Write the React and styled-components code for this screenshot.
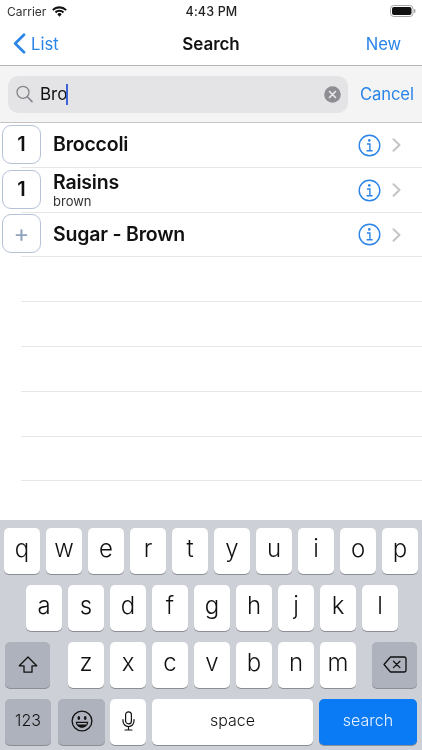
import React from "react";
import styled, { createGlobalStyle } from "styled-components";

const Global = createGlobalStyle`
  html, body { margin: 0; padding: 0; background: #fff; }
  body { font-family: Inter, "Liberation Sans", Roboto, sans-serif; color: #0a0a0a; }
  * { box-sizing: border-box; }
`;

const blue = "#2b84e8";

const Page = styled.div`
  width: 422px; height: 750px; display: flex; flex-direction: column; overflow: hidden; background: #fff;
  filter: blur(0.3px);
`;
const StatusBar = styled.div`
  height: 22px; display: grid; grid-template-columns: 1fr auto 1fr; align-items: center; padding: 0 6px 0 7px;
  font-size: 12px; color: #222; background: #fff;
`;
const Carrier = styled.div`display: flex; align-items: center; gap: 6px; font-size: 12px; color: #333;`;
const Clock = styled.div`font-size: 12.5px; font-weight: 500; letter-spacing: 0.15px;`;
const BatteryWrap = styled.div`justify-self: end; display: flex;`;
const NavBar = styled.div`
  height: 44px; display: grid; grid-template-columns: 1fr auto 1fr; align-items: center; padding: 0 21px 0 13px;
  border-bottom: 1px solid #b5b5b7; background: #fff;
`;
const BackLink = styled.div`display: flex; align-items: center; gap: 5px; color: ${blue}; font-size: 16.6px;`;
const Title = styled.div`font-size: 17px; font-weight: 600; color: #111; letter-spacing: -0.05px; margin-left: 8px;`;
const NewLink = styled.div`justify-self: end; color: ${blue}; font-size: 16.6px; letter-spacing: -0.1px;`;

const SearchBar = styled.div`
  height: 57px; background: #f4f4f5; border-bottom: 1px solid #c4c4c6; display: flex; align-items: center;
  padding: 0 8px 0 8px; gap: 12px;
`;
const Field = styled.div`
  width: 340px; height: 37px; border-radius: 10px; background: #e4e4e7; display: flex; align-items: center; padding: 0 7px 0 8px;
`;
const Query = styled.div`
  margin-left: 7px; font-size: 17px; color: #111; flex: 1; display: flex; align-items: center;
`;
const Caret = styled.span`
  display: inline-block; width: 2px; height: 21px; background: #3b62d8; margin-left: -1px;
`;
const Cancel = styled.div`color: ${blue}; font-size: 16.6px; letter-spacing: -0.1px;`;

const List = styled.div`flex: 1; display: flex; flex-direction: column; background: #fff;`;
const Row = styled.div`
  position: relative; height: 44.8px; display: flex; align-items: center; padding-left: 2px; flex: none;
  &::after { content: ""; position: absolute; left: 21px; right: 0; bottom: 0; height: 1px; background: #e6e6e8; }
`;
const EmptyRow = styled(Row)``;
const Badge = styled.div`
  width: 39px; height: 39px; flex: none; border: 1px solid #b6c2d6; border-radius: 9px; background: #fff; position: relative; z-index: 1;
  margin-bottom: 2px;
  display: flex; align-items: center; justify-content: center;
  font-size: ${p => (p.$add ? "24px" : "20px")}; font-weight: ${p => (p.$add ? 400 : 600)}; color: ${p => (p.$add ? "#8fa3bd" : "#111")};
`;
const Names = styled.div`margin-left: 12px; flex: 1; display: flex; flex-direction: column; justify-content: center; padding-bottom: 2px;`;
const Name = styled.div`font-size: 19.5px; font-weight: 600; line-height: 24px; color: #111; letter-spacing: -0.2px;`;
const Sub = styled.div`font-size: 13px; line-height: 14px; color: #333; margin-bottom: 1px;`;
const Actions = styled.div`display: flex; align-items: center; gap: 11px; padding-right: 21px;`;

const Keyboard = styled.div`
  height: 230px; background: #cdd0d6; display: flex; flex-direction: column; gap: 11px; padding: 8px 5px 0 4px; flex: none;
`;
const KeyRow = styled.div`display: flex; gap: 6px; padding-left: ${p => p.$inset || 0}px;`;
const Key = styled.div`
  height: 46px; width: ${p => p.$w || 36}px; flex: none; border-radius: 5px; display: flex; align-items: center; justify-content: center;
  background: ${p => (p.$primary ? "#0a7bf5" : p.$dark ? "#aeb2bc" : "#fff")};
  color: ${p => (p.$primary ? "#e8f3ff" : "#111")};
  box-shadow: 0 1px 0 #8b8e95;
  font-size: ${p => p.$fs || 24}px; font-weight: 300;
  margin-left: ${p => p.$ml || 0}px;
  padding-bottom: ${p => p.$pb ?? 5}px;
`;

const Wifi = () => (
  <svg width="15" height="11" viewBox="0 0 16 12" fill="#111">
    <path d="M8 11.6 5.6 8.9a3.4 3.4 0 0 1 4.8 0L8 11.6Z" />
    <path d="M8 4.2c-2 0-3.8.8-5.1 2.1l1.5 1.6A5 5 0 0 1 8 6.4a5 5 0 0 1 3.6 1.5l1.5-1.6A7.2 7.2 0 0 0 8 4.2Z" />
    <path d="M8 .4C4.9.4 2.1 1.7 0 3.7l1.4 1.6A8.9 8.9 0 0 1 8 2.6c2.6 0 4.9 1 6.6 2.7L16 3.7A11.4 11.4 0 0 0 8 .4Z" />
  </svg>
);
const Battery = () => (
  <svg width="26" height="12" viewBox="0 0 26 12">
    <rect x="0.5" y="0.5" width="22.5" height="11" rx="3.2" fill="none" stroke="#a5a5a5" />
    <rect x="2" y="2" width="19.5" height="8" rx="2" fill="#111" />
    <rect x="24" y="4" width="1.4" height="4" rx="0.7" fill="#a5a5a5" />
  </svg>
);
const BackChevron = () => (
  <svg width="13" height="21" viewBox="0 0 13 21" fill="none" stroke={blue} strokeWidth="2.7" strokeLinecap="round" strokeLinejoin="round">
    <path d="M11 1.8 2.2 10.5 11 19.2" />
  </svg>
);
const Lens = () => (
  <svg width="17" height="18" viewBox="0 0 17 18" fill="none" stroke="#85858b" strokeWidth="1.3" strokeLinecap="round">
    <circle cx="7" cy="7.3" r="6" />
    <path d="m11.4 11.8 4.6 4.8" strokeWidth="1.6" />
  </svg>
);
const ClearIcon = () => (
  <svg width="17" height="17" viewBox="0 0 17 17">
    <circle cx="8.5" cy="8.5" r="8.3" fill="#8d8d93" />
    <path d="m5.5 5.5 6 6m0-6-6 6" stroke="#e8e8ea" strokeWidth="1.7" strokeLinecap="round" />
  </svg>
);
const InfoIcon = () => (
  <svg width="23" height="23" viewBox="0 0 23 23" fill="none">
    <circle cx="11.5" cy="11.5" r="10.3" stroke={blue} strokeWidth="1.4" />
    <circle cx="11.3" cy="6.4" r="1.3" fill={blue} />
    <path d="M8.9 10h3v6.6M8.6 16.8h6" stroke={blue} strokeWidth="1.4" />
  </svg>
);
const Chevron = () => (
  <svg width="9" height="14" viewBox="0 0 9 14" fill="none" stroke="#c4c4c7" strokeWidth="2" strokeLinecap="round" strokeLinejoin="round">
    <path d="m1.5 1.3 6 5.7-6 5.7" />
  </svg>
);
const Shift = () => (
  <svg width="20" height="20" viewBox="0 0 20 20" fill="none" stroke="#111" strokeWidth="1.3" strokeLinejoin="round">
    <path d="M10 2 1.3 10.8H6v6.4h8v-6.4h4.7L10 2Z" />
  </svg>
);
const Delete = () => (
  <svg width="24" height="17" viewBox="0 0 24 17" fill="none" stroke="#111" strokeWidth="1.3" strokeLinejoin="round" strokeLinecap="round">
    <path d="M7.5 1H21a2 2 0 0 1 2 2v11a2 2 0 0 1-2 2H7.5L1 8.5 7.5 1Z" />
    <path d="m10.5 5.2 6.4 6.4m0-6.4-6.4 6.4" />
  </svg>
);
const Emoji = () => (
  <svg width="22" height="22" viewBox="0 0 22 22" fill="none">
    <circle cx="11" cy="11" r="9.9" stroke="#111" strokeWidth="1.3" />
    <ellipse cx="7.8" cy="8" rx="1.3" ry="1.9" fill="#111" />
    <ellipse cx="14.2" cy="8" rx="1.3" ry="1.9" fill="#111" />
    <path d="M4.7 11.8h12.6c-.2 3.6-2.9 6-6.3 6s-6.1-2.4-6.3-6Z" fill="#111" />
    <path d="M6 13h10c-.3.7-.6 1.2-1 1.6H7c-.4-.4-.8-.9-1-1.6Z" fill="#aeb2bc" />
  </svg>
);
const Mic = () => (
  <svg width="13" height="20" viewBox="0 0 13 20" fill="none" stroke="#111" strokeWidth="1.2" strokeLinecap="round">
    <rect x="3.6" y="0.8" width="5.8" height="12" rx="2.9" />
    <path d="M1 8.5v1.6a5.5 5.5 0 0 0 11 0V8.5M6.5 15.7v3.2M3 19h7" />
  </svg>
);

const items = [
  { q: "1", name: "Broccoli" },
  { q: "1", name: "Raisins", sub: "brown" },
  { q: "+", name: "Sugar - Brown", add: true },
];

export default function App() {
  return (
    <Page>
      <Global />
      <StatusBar>
        <Carrier>Carrier <Wifi /></Carrier>
        <Clock>4:43 PM</Clock>
        <BatteryWrap><Battery /></BatteryWrap>
      </StatusBar>
      <NavBar>
        <BackLink><BackChevron />List</BackLink>
        <Title>Search</Title>
        <NewLink>New</NewLink>
      </NavBar>
      <SearchBar>
        <Field>
          <Lens />
          <Query>Bro<Caret /></Query>
          <ClearIcon />
        </Field>
        <Cancel>Cancel</Cancel>
      </SearchBar>
      <List>
        {items.map(it => (
          <Row key={it.name}>
            <Badge $add={it.add}>{it.q}</Badge>
            <Names>
              <Name>{it.name}</Name>
              {it.sub && <Sub>{it.sub}</Sub>}
            </Names>
            <Actions><InfoIcon /><Chevron /></Actions>
          </Row>
        ))}
        {[0, 1, 2, 3, 4].map(i => <EmptyRow key={i} />)}
      </List>
      <Keyboard>
        <KeyRow>
          {"qwertyuiop".split("").map(k => <Key key={k}>{k}</Key>)}
        </KeyRow>
        <KeyRow $inset={22}>
          {"asdfghjkl".split("").map(k => <Key key={k}>{k}</Key>)}
        </KeyRow>
        <KeyRow>
          <Key $dark $w={45} $ml={1} $pb={1}><Shift /></Key>
          <Key $ml={12}>z</Key>
          {"xcvbnm".split("").map(k => <Key key={k}>{k}</Key>)}
          <Key $dark $w={45} $ml={10} $pb={1}><Delete /></Key>
        </KeyRow>
        <KeyRow>
          <Key $dark $w={46} $ml={1} $fs={16} $pb={4}>123</Key>
          <Key $dark $w={47} $ml={1} $pb={2}><Emoji /></Key>
          <Key $w={36} $ml={-1} $pb={2}><Mic /></Key>
          <Key $w={161} $fs={16}>space</Key>
          <Key $primary $w={98} $fs={16}>search</Key>
        </KeyRow>
      </Keyboard>
    </Page>
  );
}
